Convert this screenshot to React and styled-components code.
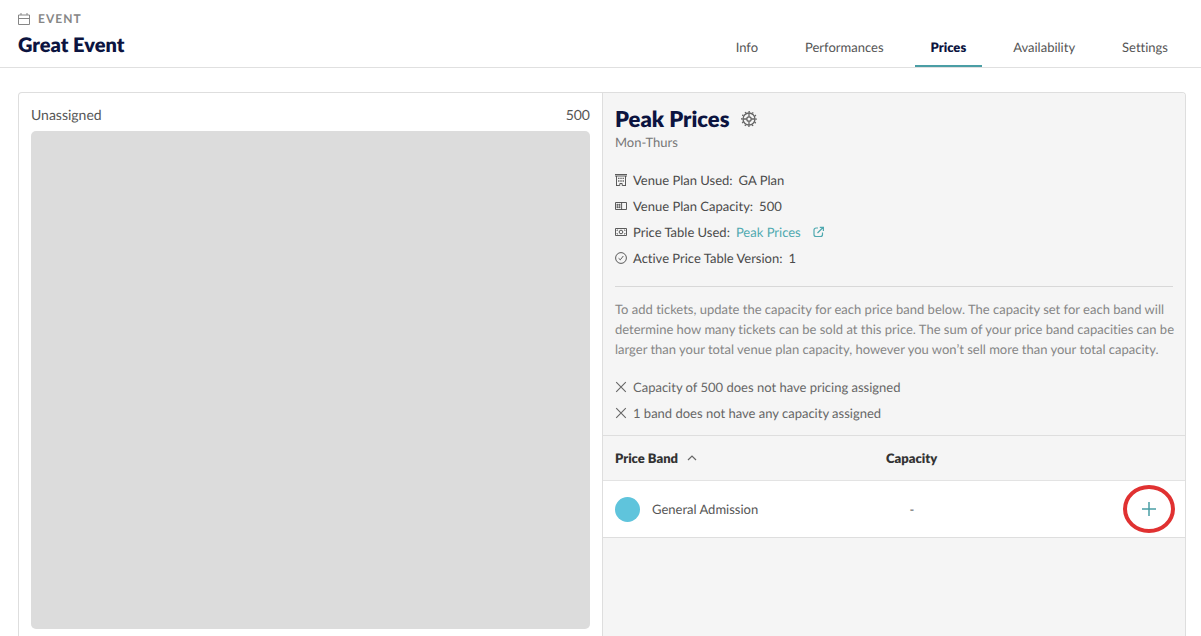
import React from "react";
import styled, { createGlobalStyle } from "styled-components";

const GlobalStyle = createGlobalStyle`
  *, *::before, *::after { box-sizing: border-box; }
  body {
    margin: 0;
    background: #fff;
    color: #4a4a4a;
    font-family: Lato, "Liberation Sans", sans-serif;
    font-size: 14px;
    line-height: 20px;
    font-variant-ligatures: none;
    text-rendering: geometricPrecision;
  }
`;

const Page = styled.div`
  display: flex;
  flex-direction: column;
  min-height: 100vh;
`;

const Header = styled.header`
  display: flex;
  justify-content: space-between;
  align-items: flex-end;
  height: 68px;
  padding: 0 17px 0 18px;
  border-bottom: 1px solid #e0e0e0;
`;

const TitleBlock = styled.div`
  align-self: flex-start;
  padding-top: 10px;
`;

const Eyebrow = styled.div`
  display: flex;
  align-items: center;
  gap: 8px;
  color: #868686;
  font-size: 12px;
  font-weight: 700;
  letter-spacing: 1px;
  line-height: 18px;
`;

const EventTitle = styled.h1`
  margin: 4px 0 0;
  color: #0c1440;
  font-size: 20px;
  font-weight: 800;
  line-height: 26px;
`;

const Tabs = styled.nav`
  display: flex;
  gap: 15px;
`;

const Tab = styled.a`
  display: grid;
  justify-items: center;
  padding: 10px 16px 8px;
  border-bottom: 2px solid ${(p) => (p.$active ? "#4a9ea5" : "transparent")};
  color: ${(p) => (p.$active ? "#0c1440" : "#555")};
  font-size: 13px;
  font-weight: ${(p) => (p.$active ? 800 : 400)};
  text-decoration: none;
`;

const Card = styled.main`
  flex: 1;
  display: grid;
  grid-template-columns: 1fr 1fr;
  margin: 24px 15px 0 18px;
  border: 1px solid #dedede;
  border-bottom: 0;
  border-radius: 4px 4px 0 0;
  overflow: hidden;
`;

const PlanPane = styled.section`
  display: flex;
  flex-direction: column;
  padding: 12px 12px 7px;
`;

const PlanHeading = styled.div`
  display: flex;
  justify-content: space-between;
  margin-bottom: 6px;
  color: #555;
`;

const PlanArea = styled.div`
  flex: 1;
  min-height: 200px;
  border-radius: 5px;
  background: #dcdcdc;
`;

const PricePane = styled.section`
  border-left: 1px solid #dedede;
  background: #f5f5f5;
`;

const Details = styled.div`
  padding: 13px 12px 12px;
`;

const PriceTitle = styled.h2`
  display: flex;
  align-items: center;
  gap: 12px;
  margin: 0;
  color: #0c1440;
  font-size: 22px;
  font-weight: 800;
  line-height: 26px;
`;

const IconButton = styled.button`
  display: flex;
  padding: 0;
  border: 0;
  background: none;
  color: ${(p) => p.$color};
  cursor: pointer;
`;

const Days = styled.p`
  margin: 0;
  color: #777;
  font-size: 13px;
`;

const LineList = styled.ul`
  display: grid;
  gap: 6px;
  margin: ${(p) => p.$top}px 0 0;
  padding: 0;
  list-style: none;
  color: ${(p) => p.$color};
  font-size: 13px;
`;

const Line = styled.li`
  display: flex;
  align-items: center;
  gap: 6px;
`;

const TableLink = styled.a`
  display: flex;
  align-items: center;
  gap: 12px;
  color: #4fa9b0;
  text-decoration: none;
`;

const Rule = styled.hr`
  margin: 18px 0 12px;
  border: 0;
  border-top: 1px solid #d8d8d8;
`;

const Help = styled.p`
  margin: 0 -8px 0 0;
  color: #868686;
  font-size: 13px;
`;

const BandTable = styled.table`
  width: 100%;
  border-collapse: collapse;
  table-layout: fixed;
  border-top: 1px solid #dedede;
  border-bottom: 1px solid #dedede;
  font-size: 13px;
`;

const HeadCell = styled.th`
  width: ${(p) => p.$width};
  height: 45px;
  padding: 0 12px;
  color: #333;
  font-weight: 800;
  text-align: left;
`;

const SortButton = styled.button`
  display: flex;
  align-items: center;
  gap: 8px;
  padding: 0;
  border: 0;
  background: none;
  color: inherit;
  font: inherit;
  text-rendering: inherit;
  cursor: pointer;
`;

const BandRow = styled.tr`
  border-top: 1px solid #e3e3e3;
  background: #fff;
`;

const Cell = styled.td`
  height: 57px;
  padding: ${(p) => (p.$flush ? "0 10px 0 0" : "0 12px")};
  color: #555;
`;

const Band = styled.div`
  display: flex;
  align-items: center;
  gap: 12px;
`;

const Swatch = styled.span`
  width: 25px;
  height: 25px;
  border-radius: 50%;
  background: #5fc4dc;
`;

const Amount = styled.div`
  width: 52px;
  text-align: center;
`;

const AddButton = styled.button`
  display: flex;
  align-items: center;
  justify-content: center;
  width: 52px;
  height: 48px;
  margin-left: auto;
  padding: 0;
  border: 4px solid #e03131;
  border-radius: 50%;
  background: none;
  color: #4a9ea5;
  cursor: pointer;
`;

const Icon = ({ size = 12, children, ...rest }) => (
  <svg
    width={size}
    height={size}
    viewBox={`0 0 ${size} ${size}`}
    fill="none"
    stroke="currentColor"
    strokeWidth="1"
    aria-hidden="true"
    {...rest}
  >
    {children}
  </svg>
);

const CalendarIcon = () => (
  <Icon>
    <path d="M.5 2h11v9.5H.5zM.5 5.5h11M3 0v2M9 0v2" />
  </Icon>
);

const GearIcon = () => (
  <Icon size={16} strokeWidth="1.3">
    <circle cx="8" cy="8" r="6" />
    <circle cx="8" cy="8" r="2.2" />
    <path d="M8 1.8v4M8 10.2v4M1.8 8h4M10.2 8h4" />
    <circle cx="8" cy="8" r="7.2" strokeWidth="1.4" strokeDasharray="1.5 2.27" strokeDashoffset=".75" />
  </Icon>
);

const BuildingIcon = () => (
  <Icon>
    <path d="M0 .5h12M0 2h12M1.5 2v9.5M10.5 2v9.5M1 11.5h3.8V9.5h2.4v2H11" strokeWidth=".9" />
    <path d="M3.2 4.4h1.2M5.4 4.4h1.2M7.6 4.4h1.2M3.2 7h1.2M5.4 7h1.2M7.6 7h1.2" strokeWidth="1.3" />
  </Icon>
);

const CapacityIcon = () => (
  <Icon>
    <path d="M.5 2.5h11v7H.5zM6.6 2.5v7" strokeWidth=".9" />
    <path d="M2.3 3.8v4.4M4.7 3.8v4.4M1.6 4.8h3.8M1.6 7.2h3.8" strokeWidth=".8" />
  </Icon>
);

const MoneyIcon = () => (
  <Icon strokeWidth=".9">
    <path d="M.5 2.5h11v7H.5z" />
    <circle cx="6" cy="6" r="1.8" />
    <path d="M2 5V4h1M2 7v1h1M10 5V4H9M10 7v1H9" strokeWidth=".7" />
  </Icon>
);

const CheckIcon = () => (
  <Icon strokeWidth=".9">
    <circle cx="6" cy="6" r="5.4" />
    <path d="M3.6 6.3l1.7 1.5 3-3.8" />
  </Icon>
);

const ExternalIcon = () => (
  <Icon strokeWidth="1.2">
    <path d="M5 2H3a2 2 0 0 0-2 2v4.5a2 2 0 0 0 2 2h4.5a2 2 0 0 0 2-2V6.5M4.5 7l5.5-5.5M6.8 1.3h3.6v3.6" />
  </Icon>
);

const CrossIcon = () => (
  <Icon strokeWidth="1.1">
    <path d="M1.2 1.2l9.6 9.6M10.8 1.2L1.2 10.8" />
  </Icon>
);

const ChevronIcon = () => (
  <Icon strokeWidth="1.2" stroke="#666">
    <path d="M2 8l4-4 4 4" />
  </Icon>
);

const PlusIcon = () => (
  <Icon size={14} strokeWidth="1.5">
    <path d="M7 0v14M0 7h14" />
  </Icon>
);

const TABS = ["Info", "Performances", "Prices", "Availability", "Settings"];

export default function App() {
  return (
    <Page>
      <GlobalStyle />
      <Header>
        <TitleBlock>
          <Eyebrow>
            <CalendarIcon />
            EVENT
          </Eyebrow>
          <EventTitle>Great Event</EventTitle>
        </TitleBlock>
        <Tabs>
          {TABS.map((name) => (
            <Tab key={name} href={`#${name.toLowerCase()}`} $active={name === "Prices"}>
              {name}
            </Tab>
          ))}
        </Tabs>
      </Header>
      <Card>
        <PlanPane>
          <PlanHeading>
            <span>Unassigned</span>
            <span>500</span>
          </PlanHeading>
          <PlanArea />
        </PlanPane>
        <PricePane>
          <Details>
            <PriceTitle>
              Peak Prices
              <IconButton type="button" aria-label="Price settings" $color="#666">
                <GearIcon />
              </IconButton>
            </PriceTitle>
            <Days>Mon-Thurs</Days>
            <LineList $top={18} $color="#4a4a4a">
              <Line>
                <BuildingIcon />
                <span>Venue Plan Used:</span>
                <span>GA Plan</span>
              </Line>
              <Line>
                <CapacityIcon />
                <span>Venue Plan Capacity:</span>
                <span>500</span>
              </Line>
              <Line>
                <MoneyIcon />
                <span>Price Table Used:</span>
                <TableLink href="#peak-prices">
                  Peak Prices
                  <ExternalIcon />
                </TableLink>
              </Line>
              <Line>
                <CheckIcon />
                <span>Active Price Table Version:</span>
                <span>1</span>
              </Line>
            </LineList>
            <Rule />
            <Help>
              To add tickets, update the capacity for each price band below. The capacity set for
              each band will determine how many tickets can be sold at this price. The sum of your
              price band capacities can be larger than your total venue plan capacity, however you
              won’t sell more than your total capacity.
            </Help>
            <LineList $top={18} $color="#666">
              <Line>
                <CrossIcon />
                <span>Capacity of 500 does not have pricing assigned</span>
              </Line>
              <Line>
                <CrossIcon />
                <span>1 band does not have any capacity assigned</span>
              </Line>
            </LineList>
          </Details>
          <BandTable>
            <thead>
              <tr>
                <HeadCell scope="col" $width="271px">
                  <SortButton type="button">
                    Price Band
                    <ChevronIcon />
                  </SortButton>
                </HeadCell>
                <HeadCell scope="col" $width="auto">Capacity</HeadCell>
                <HeadCell scope="col" $width="72px" aria-label="Actions" />
              </tr>
            </thead>
            <tbody>
              <BandRow>
                <Cell>
                  <Band>
                    <Swatch />
                    General Admission
                  </Band>
                </Cell>
                <Cell>
                  <Amount>-</Amount>
                </Cell>
                <Cell $flush>
                  <AddButton type="button" aria-label="Add capacity">
                    <PlusIcon />
                  </AddButton>
                </Cell>
              </BandRow>
            </tbody>
          </BandTable>
        </PricePane>
      </Card>
    </Page>
  );
}
